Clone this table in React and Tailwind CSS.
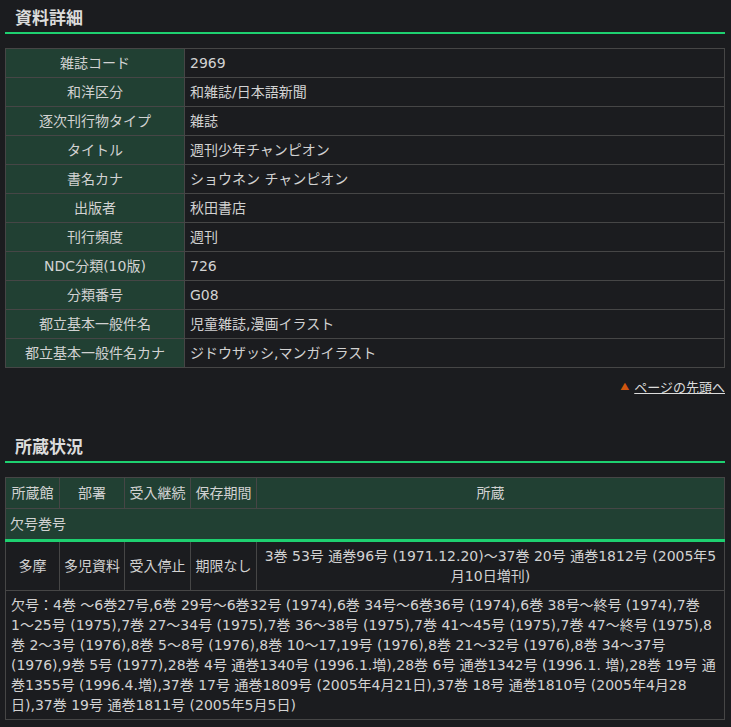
const details = [
  ['雑誌コード', '2969'],
  ['和洋区分', '和雑誌/日本語新聞'],
  ['逐次刊行物タイプ', '雑誌'],
  ['タイトル', '週刊少年チャンピオン'],
  ['書名カナ', 'ショウネン チャンピオン'],
  ['出版者', '秋田書店'],
  ['刊行頻度', '週刊'],
  ['NDC分類(10版)', '726'],
  ['分類番号', 'G08'],
  ['都立基本一般件名', '児童雑誌,漫画イラスト'],
  ['都立基本一般件名カナ', 'ジドウザッシ,マンガイラスト'],
];

const missing =
  '欠号：4巻 〜6巻27号,6巻 29号〜6巻32号 (1974),6巻 34号〜6巻36号 (1974),6巻 38号〜終号 (1974),7巻 1〜25号 (1975),7巻 27〜34号 (1975),7巻 36〜38号 (1975),7巻 41〜45号 (1975),7巻 47〜終号 (1975),8巻 2〜3号 (1976),8巻 5〜8号 (1976),8巻 10〜17,19号 (1976),8巻 21〜32号 (1976),8巻 34〜37号 (1976),9巻 5号 (1977),28巻 4号 通巻1340号 (1996.1.増),28巻 6号 通巻1342号 (1996.1. 増),28巻 19号 通巻1355号 (1996.4.増),37巻 17号 通巻1809号 (2005年4月21日),37巻 18号 通巻1810号 (2005年4月28日),37巻 19号 通巻1811号 (2005年5月5日)';

function Heading({ children }) {
  return (
    <h2
      className="pt-[5px] pb-[3px] px-[10px] text-[17px] leading-[24px] font-bold text-[#dcdcdc] border-b-2 border-[#1ed070]"
      style={{ fontFamily: '"Noto Sans CJK JP", sans-serif' }}
    >
      {children}
    </h2>
  );
}

export default function App() {
  return (
    <div
      className="min-h-screen bg-[#1b1c1f] text-[#d2d2d2] text-sm leading-[20px]"
      style={{ fontFamily: '"DejaVu Sans", "Noto Sans CJK JP", sans-serif' }}
    >
      <div className="ml-[5px] w-[720px]">
        <Heading>資料詳細</Heading>

        <table className="mt-[14px] w-full table-fixed border-collapse">
          <tbody>
            {details.map(([label, value]) => (
              <tr key={label}>
                <th className="w-[179px] border border-[#464646] bg-[#214033] py-[4px] px-[5px] font-normal text-center">
                  {label}
                </th>
                <td className="border border-[#464646] py-[4px] px-[5px] text-left">{value}</td>
              </tr>
            ))}
          </tbody>
        </table>

        <div
          className="mt-[10px] flex justify-end items-center gap-[5px] text-[13px] leading-[18px]"
          style={{ fontFamily: '"Noto Sans CJK JP", sans-serif' }}
        >
          <span className="text-[#d0560f] text-[9px]">▲</span>
          <a href="#" className="underline text-[#dcdcdc]">
            ページの先頭へ
          </a>
        </div>

        <div className="mt-[33px]">
          <Heading>所蔵状況</Heading>
        </div>

        <table className="mt-[14px] w-full table-fixed border-collapse">
          <thead>
            <tr className="bg-[#214033]">
              <th className="w-[54px] border border-[#464646] py-[5px] font-normal">所蔵館</th>
              <th className="w-[65px] border border-[#464646] py-[5px] font-normal">部署</th>
              <th className="w-[66px] border border-[#464646] py-[5px] font-normal">受入継続</th>
              <th className="w-[66px] border border-[#464646] py-[5px] font-normal">保存期間</th>
              <th className="border border-[#464646] py-[5px] font-normal">所蔵</th>
            </tr>
            <tr className="bg-[#214033]">
              <th
                colSpan={5}
                className="border border-[#464646] border-b-[3px] border-b-[#1ed070] py-[5px] px-[4px] font-normal text-left"
              >
                欠号巻号
              </th>
            </tr>
          </thead>
          <tbody>
            <tr>
              <td className="border border-[#464646] text-center">多摩</td>
              <td className="border border-[#464646] text-center">多児資料</td>
              <td className="border border-[#464646] text-center">受入停止</td>
              <td className="border border-[#464646] text-center">期限なし</td>
              <td className="border border-[#464646] py-[4px] px-[5px] text-center align-top">
                3巻 53号 通巻96号 (1971.12.20)〜37巻 20号 通巻1812号 (2005年5月10日増刊)
              </td>
            </tr>
            <tr>
              <td colSpan={5} className="border border-[#464646] py-[4px] px-[5px] text-left">
                {missing}
              </td>
            </tr>
          </tbody>
        </table>
      </div>
    </div>
  );
}
